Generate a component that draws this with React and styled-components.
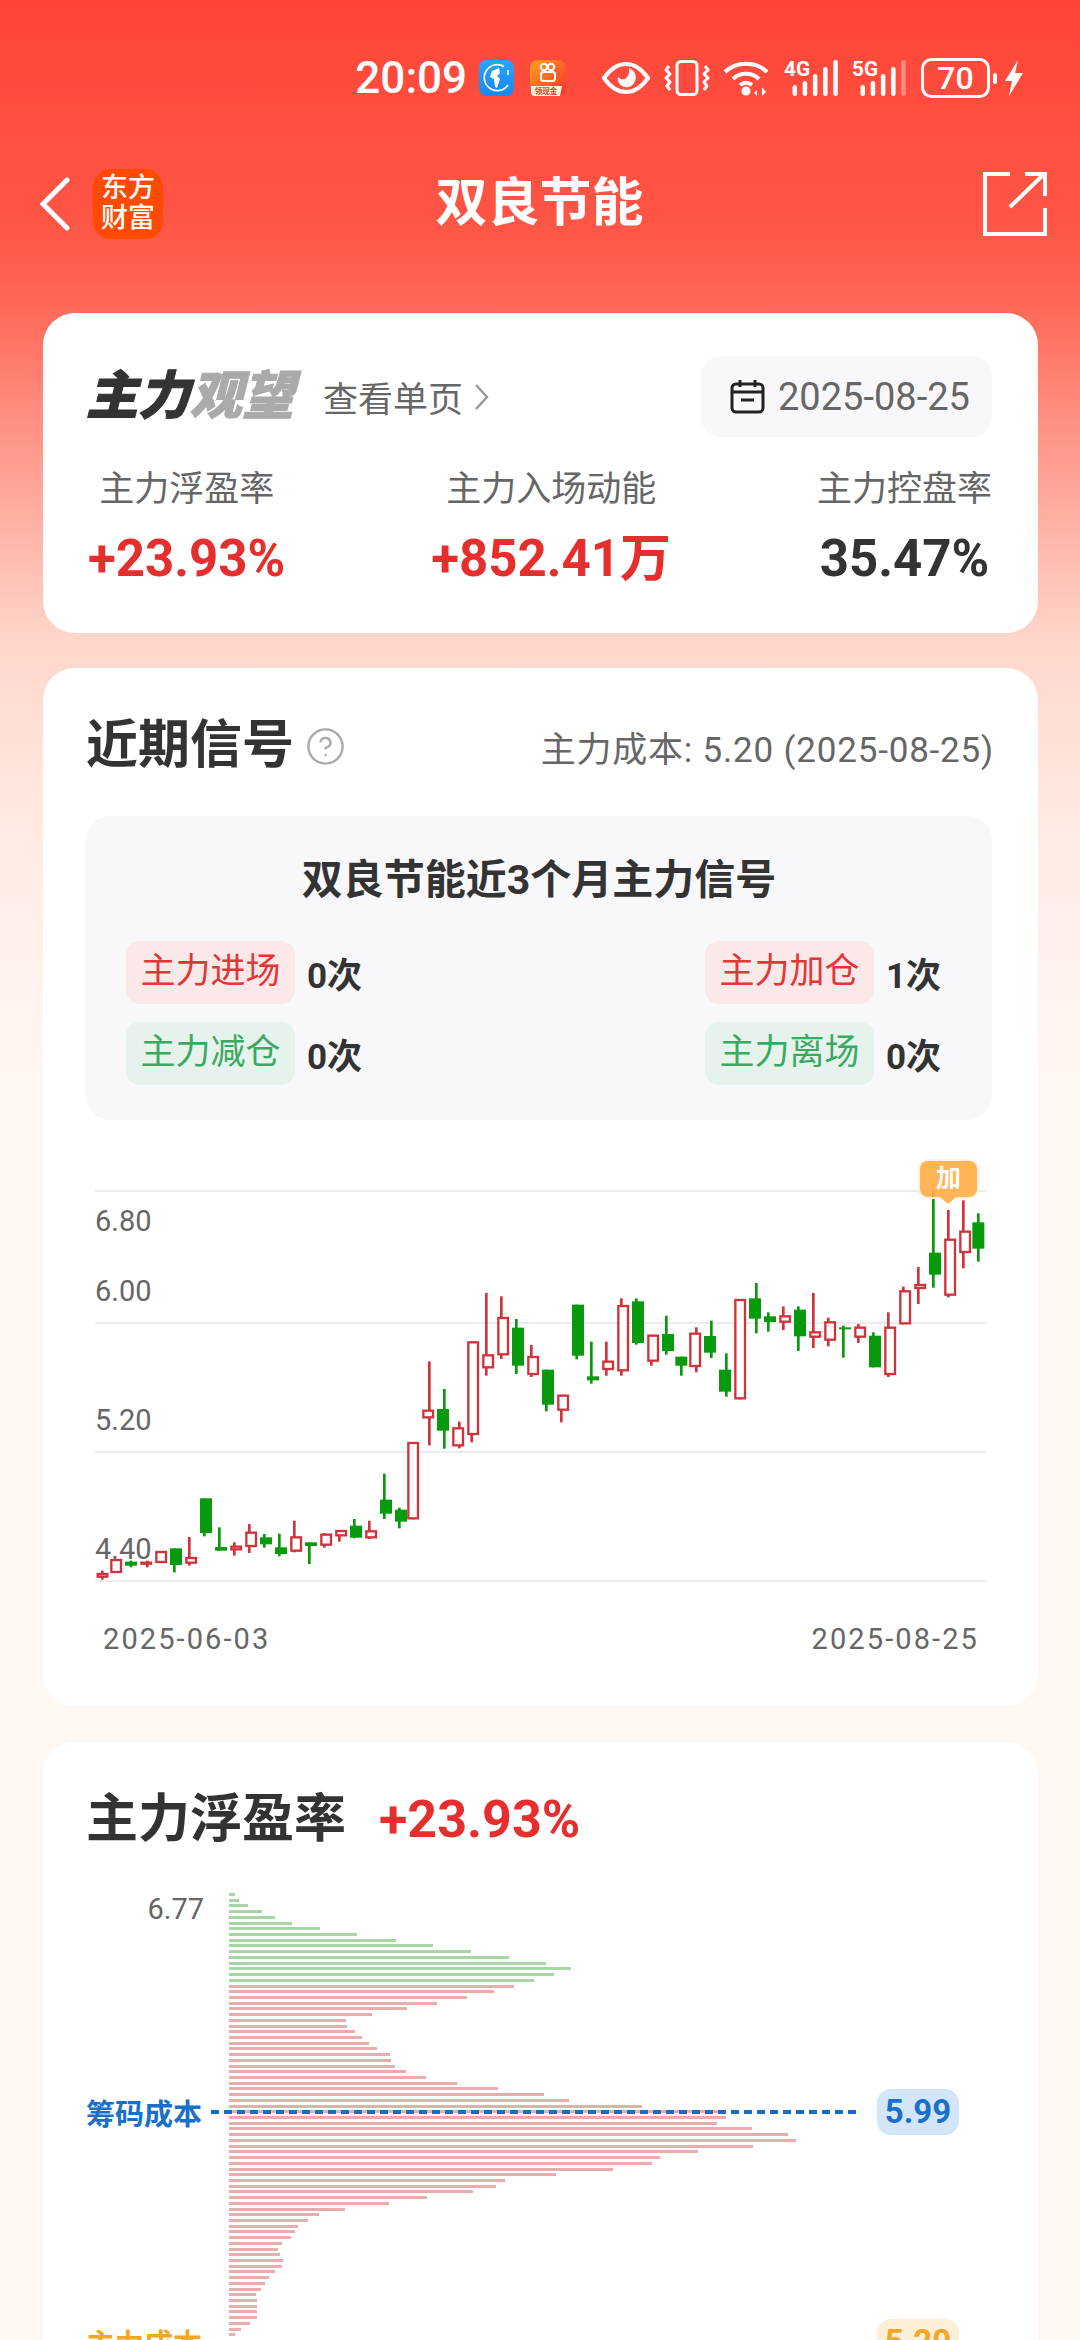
import React from "react";
import styled, { createGlobalStyle } from "styled-components";
import { CircleHelp } from "lucide-react";

const FONT = `Roboto, "Noto Sans CJK SC", sans-serif`;

// [bodyCenter, wickX, wickTop, wickBottom, bodyTop, bodyBottom, up], in units of 1/3 px
const CANDLES = [
  [97, 97, 1295, 1322, 1302, 1316, 1],
  [138, 138, 1260, 1302, 1260, 1302, 1],
  [183, 183, 1265, 1285, 1268, 1280, 0],
  [228, 232, 1265, 1285, 1268, 1275, 1],
  [273, 273, 1236, 1272, 1236, 1272, 1],
  [318, 313, 1228, 1300, 1228, 1278, 0],
  [363, 358, 1194, 1280, 1254, 1274, 1],
  [408, 403, 1078, 1192, 1078, 1182, 0],
  [453, 448, 1165, 1235, 1224, 1235, 0],
  [498, 493, 1210, 1250, 1220, 1234, 1],
  [543, 538, 1155, 1242, 1178, 1224, 1],
  [588, 583, 1185, 1226, 1195, 1216, 0],
  [633, 628, 1184, 1252, 1225, 1245, 0],
  [678, 673, 1145, 1240, 1192, 1238, 1],
  [723, 718, 1210, 1275, 1210, 1221, 0],
  [768, 763, 1182, 1226, 1184, 1220, 1],
  [813, 808, 1173, 1208, 1173, 1192, 1],
  [858, 853, 1140, 1198, 1160, 1196, 0],
  [903, 898, 1145, 1200, 1174, 1198, 1],
  [948, 943, 1004, 1140, 1082, 1124, 0],
  [993, 988, 1106, 1168, 1112, 1148, 0],
  [1029, 1029, 909, 1141, 909, 1141, 1],
  [1074, 1078, 667, 919, 812, 838, 1],
  [1119, 1123, 750, 929, 810, 875, 0],
  [1164, 1168, 848, 928, 865, 922, 1],
  [1209, 1205, 607, 910, 607, 888, 1],
  [1254, 1249, 462, 710, 646, 688, 1],
  [1299, 1294, 472, 660, 534, 649, 1],
  [1344, 1339, 540, 705, 566, 680, 0],
  [1389, 1384, 618, 714, 651, 708, 1],
  [1434, 1429, 692, 817, 692, 797, 0],
  [1479, 1474, 767, 850, 767, 815, 1],
  [1524, 1520, 497, 661, 497, 650, 0],
  [1569, 1564, 608, 734, 712, 724, 0],
  [1614, 1609, 608, 710, 665, 693, 1],
  [1659, 1654, 478, 710, 498, 697, 1],
  [1704, 1699, 478, 617, 487, 612, 0],
  [1749, 1744, 587, 680, 587, 668, 1],
  [1794, 1789, 530, 647, 585, 636, 0],
  [1834, 1834, 653, 710, 653, 680, 0],
  [1875, 1879, 565, 700, 581, 684, 1],
  [1920, 1924, 545, 657, 591, 641, 0],
  [1965, 1969, 643, 773, 692, 758, 0],
  [2010, 2010, 480, 781, 480, 781, 1],
  [2055, 2059, 432, 583, 478, 539, 0],
  [2100, 2095, 520, 578, 532, 549, 0],
  [2145, 2140, 502, 573, 529, 551, 1],
  [2190, 2185, 502, 636, 512, 592, 0],
  [2235, 2230, 462, 627, 577, 596, 1],
  [2280, 2275, 536, 622, 547, 605, 1],
  [2325, 2320, 560, 656, 565, 571, 0],
  [2370, 2365, 555, 612, 563, 596, 1],
  [2415, 2410, 580, 685, 590, 685, 0],
  [2460, 2455, 520, 714, 563, 708, 1],
  [2505, 2500, 443, 556, 454, 556, 1],
  [2550, 2545, 384, 495, 435, 450, 1],
  [2595, 2590, 155, 446, 341, 407, 0],
  [2640, 2635, 213, 475, 299, 470, 1],
  [2685, 2680, 184, 388, 275, 342, 1],
  [2725, 2725, 223, 368, 250, 329, 0],
];

const GREEN_BARS = [6, 10, 19, 33, 46, 63, 91, 128, 167, 204, 242, 280, 317, 342, 325, 305];
const RED_BARS = [
  285, 265, 238, 208, 178, 143, 117, 118, 126, 133, 140, 148, 161, 162, 166, 177, 197, 228, 269,
  315, 340, 413, 493, 497, 488, 523, 559, 567, 524, 469, 431, 423, 384, 327, 276, 267, 244, 198,
  160, 116, 90, 79, 69, 66, 62, 53, 49, 51, 54, 53, 46, 40, 36, 32, 27, 28, 28, 28, 28, 21, 12, 6,
];

const GlobalStyle = createGlobalStyle`
  html, body {
    margin: 0;
    padding: 0;
    background: #fff7f2;
  }
  * {
    box-sizing: border-box;
  }
`;

const Page = styled.div`
  width: 1080px;
  height: 2340px;
  overflow: hidden;
  padding: 58px 42px 0 43px;
  font-family: ${FONT};
  color: #333;
  background: linear-gradient(
    180deg,
    #ff4537 0,
    #ff5545 220px,
    #ff6656 300px,
    #ff9a8c 450px,
    #ffd6cb 640px,
    #ffeae2 820px,
    #fff7f2 1080px
  );
`;

const StatusBar = styled.div`
  display: flex;
  align-items: center;
  justify-content: flex-end;
  height: 40px;
  margin-right: 14px;
  color: #fff;
`;

const Clock = styled.span`
  font-size: 44px;
  line-height: 40px;
  font-weight: 500;
  margin-right: 12px;
`;

const StatusSlot = styled.span`
  display: flex;
  margin-left: ${(p) => p.$gap || 0}px;
  margin-top: ${(p) => p.$lift || 0}px;
`;

const Header = styled.header`
  position: relative;
  display: flex;
  align-items: center;
  justify-content: space-between;
  height: 70px;
  margin: 71px -9px 74px -3px;
`;

const BackGroup = styled.div`
  display: flex;
  align-items: center;
  gap: 23px;
`;

const AppLogo = styled.div`
  width: 70px;
  height: 70px;
  padding-top: 4px;
  border-radius: 18px;
  background: #ff4a00;
  color: #fff;
  font-size: 27px;
  line-height: 30px;
  font-weight: 500;
  text-align: center;
`;

const Title = styled.h1`
  position: absolute;
  left: 0;
  right: 0;
  margin: 0;
  padding-right: 8px;
  font-size: 52px;
  line-height: 70px;
  font-weight: 700;
  color: #fff;
  text-align: center;
`;

const Card = styled.section`
  margin-bottom: ${(p) => p.$gap || 0}px;
  padding: ${(p) => p.$pad || 48}px 46px ${(p) => p.$padEnd || 47}px 43px;
  background: #fff;
  border-radius: 32px;
`;

const TopRow = styled.div`
  display: flex;
  align-items: center;
  justify-content: space-between;
  height: 81px;
`;

const Row = styled.div`
  display: flex;
  align-items: center;
`;

const BrandMark = styled.div`
  font-size: 52px;
  line-height: 60px;
  font-weight: 900;
  font-style: italic;
  color: #333;
  -webkit-text-stroke: 1px currentColor;

  span {
    color: #aaa;
  }
`;

const SingleLink = styled.span`
  margin-left: 29px;
  font-size: 35px;
  color: #666;
`;

const DatePill = styled.div`
  display: flex;
  align-items: center;
  gap: 13px;
  width: 291px;
  height: 81px;
  padding-left: 29px;
  border-radius: 20px;
  background: #f8f8fa;
  font-size: 38px;
  color: #666;
`;

const Stats = styled.div`
  display: flex;
  justify-content: space-between;
  margin: 33px 0 0 2px;
`;

const Stat = styled.div`
  text-align: center;
`;

const StatLabel = styled.div`
  font-size: 35px;
  line-height: 40px;
  color: #666;
`;

const StatValue = styled.div`
  margin-top: 19px;
  font-size: 51px;
  line-height: 60px;
  font-weight: 700;
  white-space: nowrap;
  color: ${(p) => (p.$red ? "#e62e2e" : "#333")};
`;

const SectionHead = styled.div`
  display: flex;
  align-items: center;
  justify-content: space-between;
  height: 60px;
`;

const SectionTitle = styled.h2`
  margin: 0;
  font-size: 52px;
  line-height: 60px;
  font-weight: 700;
  color: #333;
`;

const SectionNote = styled.span`
  margin-right: -2px;
  font-size: 35px;
  letter-spacing: 0.8px;
  color: #666;
  white-space: nowrap;
`;

const SignalPanel = styled.div`
  height: 304px;
  margin-top: 40px;
  padding: 39px 51px 0 40px;
  border-radius: 24px;
  background: #f8f8fa;
`;

const PanelTitle = styled.div`
  height: 50px;
  margin-right: -11px;
  font-size: 41px;
  line-height: 50px;
  font-weight: 700;
  text-align: center;
  color: #333;
`;

const SignalGrid = styled.div`
  display: grid;
  grid-template-columns: auto auto;
  justify-content: space-between;
  row-gap: 18px;
  margin-top: 36px;
`;

const Signal = styled.div`
  display: flex;
  align-items: center;
  gap: 12px;
`;

const Chip = styled.span`
  width: 169px;
  height: 63px;
  border-radius: 14px;
  font-size: 35px;
  line-height: 62px;
  text-align: center;
  background: ${(p) => (p.$tone === "red" ? "#fbe8e8" : "#e6f3ec")};
  color: ${(p) => (p.$tone === "red" ? "#e23636" : "#3aa962")};
`;

const Count = styled.span`
  font-size: 35px;
  font-weight: 700;
  color: #333;
`;

const KChart = styled.div`
  position: relative;
  width: 891px;
  margin: 70px 0 0 9px;
  border-top: 2px solid #ececec;
`;

const KRow = styled.div`
  display: flex;
  flex-direction: column;
  justify-content: ${(p) => (p.$spread ? "space-between" : "flex-end")};
  height: ${(p) => p.$h}px;
  padding: ${(p) => (p.$spread ? 13 : 0)}px 0 15px;
  border-bottom: 2px solid #ececec;
`;

const AxisLabel = styled.span`
  font-size: 29px;
  line-height: 32px;
  color: #666;
`;

const CandleLayer = styled.svg`
  position: absolute;
  left: -25px;
  top: -53px;
  width: 1000px;
  height: 520px;
`;

const Flag = styled.div`
  position: absolute;
  left: 825px;
  top: -31px;
  width: 57px;
  height: 36px;
  border-radius: 8px;
  background: rgba(255, 172, 68, 0.9);
  box-shadow: 0 0 0 2px #fff1df;
  font-size: 25px;
  line-height: 35px;
  font-weight: 700;
  text-align: center;
  color: #fff;

  &::after {
    content: "";
    position: absolute;
    left: 20px;
    top: 36px;
    border-style: solid;
    border-width: 7px 8px 0;
    border-color: rgba(255, 172, 68, 0.9) transparent transparent;
  }
`;

const DateAxis = styled.div`
  display: flex;
  justify-content: space-between;
  width: 891px;
  margin: 37px 0 0 9px;
  padding: 0 7px 0 8px;
  font-size: 29px;
  line-height: 40px;
  letter-spacing: 2.1px;
  color: #666;
`;

const ProfitValue = styled.span`
  margin-left: 33px;
  font-size: 52px;
  line-height: 60px;
  font-weight: 700;
  color: #e62e2e;
`;

const ChipChart = styled.div`
  position: relative;
  display: flex;
  margin-top: 43px;
`;

const PriceColumn = styled.div`
  width: 143px;
  padding: 0 25px 0 0;
  text-align: right;
`;

const BarStack = styled.div`
  display: flex;
  flex-direction: column;
  gap: 2.73px;
`;

const ChipBar = styled.div`
  height: 3px;
  background: ${(p) => (p.$green ? "#a8d6a4" : "#e9adae")};
  box-shadow: 0 0 1px ${(p) => (p.$green ? "#d6edd4" : "#f8dcdc")};
`;

const Marker = styled.div`
  position: absolute;
  left: 0;
  top: ${(p) => p.$top}px;
  display: flex;
  align-items: center;
  height: 46px;
  color: ${(p) => p.$color};
`;

const MarkerName = styled.span`
  width: 125px;
  font-size: 29px;
  font-weight: 700;
  white-space: nowrap;
`;

const DashLine = styled.div`
  width: 648px;
  height: ${(p) => p.$thick}px;
  background: repeating-linear-gradient(
    90deg,
    ${(p) => p.$color} 0 ${(p) => p.$dash}px,
    transparent ${(p) => p.$dash}px 13px
  );
`;

const MarkerValue = styled.span`
  width: 82px;
  height: 46px;
  margin-left: 18px;
  border-radius: 14px;
  background: ${(p) => p.$bg};
  font-size: 33px;
  line-height: 46px;
  font-weight: 700;
  text-align: center;
`;

function GlobeIcon() {
  return (
    <svg width="35" height="36" viewBox="0 0 35 36">
      <defs>
        <linearGradient id="globeBg" x1="0" y1="0" x2="0" y2="1">
          <stop offset="0" stopColor="#2aa5fb" />
          <stop offset="1" stopColor="#1689f5" />
        </linearGradient>
      </defs>
      <rect width="35" height="36" rx="8" fill="url(#globeBg)" />
      <path d="M25 6.5A13 13 0 1 0 29 25" fill="none" stroke="#fff" strokeWidth="1.6" />
      <path d="M29 10v5" stroke="#fff" strokeWidth="1.6" />
      <path d="M13 11l7-3 1 5-3 3 3 3-3 9-2-1-1-8-4-2z" fill="#fff" />
    </svg>
  );
}

function CashAppIcon() {
  return (
    <svg width="36" height="36" viewBox="0 0 36 36">
      <defs>
        <linearGradient id="cashBg" x1="0" y1="0" x2="1" y2="1">
          <stop offset="0" stopColor="#ffa31a" />
          <stop offset="1" stopColor="#f5302e" />
        </linearGradient>
      </defs>
      <rect width="36" height="36" rx="8" fill="url(#cashBg)" />
      <circle cx="14" cy="7" r="3.2" fill="none" stroke="#fff" strokeWidth="2" />
      <circle cx="21" cy="7" r="3.2" fill="none" stroke="#fff" strokeWidth="2" />
      <rect x="11" y="12" width="14" height="9" rx="2.5" fill="none" stroke="#fff" strokeWidth="2" />
      <path d="M1 26h31l-2 10H5a4 4 0 0 1-4-4z" fill="#fff3d8" />
      <text x="16" y="34" fontSize="7.5" fontWeight="700" fill="#d2431e" textAnchor="middle">
        领现金
      </text>
    </svg>
  );
}

function EyeIcon() {
  return (
    <svg width="48" height="32" viewBox="0 0 48 32">
      <path
        d="M2 16C9 6 16 2 24 2s15 4 22 14c-7 10-14 14-22 14S9 26 2 16z"
        fill="none"
        stroke="#fff"
        strokeWidth="4"
      />
      <path d="M27 6c6 3 8 8 6 13-2 5-6 7-10 6-5-1-8-5-7-10 2 2 4 3 7 2 3-2 5-6 4-11z" fill="#fff" />
    </svg>
  );
}

function VibrateIcon() {
  return (
    <svg width="46" height="36" viewBox="0 0 46 36" fill="none" stroke="#fff" strokeWidth="3">
      <rect x="13" y="1.5" width="20" height="33" rx="4" />
      <path d="M5 6l-3 4 4 4-4 4 4 4-3 4 3 4M41 6l3 4-4 4 4 4-4 4 3 4-3 4" strokeLinejoin="round" />
    </svg>
  );
}

function WifiIcon() {
  return (
    <svg width="48" height="36" viewBox="0 0 48 36" fill="none" stroke="#fff" strokeWidth="4">
      <path d="M2 12C13 1 33 1 44 12" />
      <path d="M10 19c7-7 19-7 26 0" />
      <path d="M17 25c4-3 8-3 12 0" />
      <circle cx="23" cy="31" r="4.5" fill="#fff" stroke="none" />
      <path d="M34 36v-6l-3 3zM39 36v-9l4 5z" fill="#fff" stroke="none" />
    </svg>
  );
}

function SignalIcon({ label, faded }) {
  const heights = [11, 15, 22, 29, 36];
  return (
    <svg width="54" height="44" viewBox="0 -8 54 44">
      <text x="0" y="16" fontSize="20" fontWeight="700" fill="#fff" fontFamily="Roboto" textLength="26" lengthAdjust="spacingAndGlyphs">
        {label}
      </text>
      {heights.map((h, i) => (
        <rect
          key={i}
          x={8.5 + i * 10.2}
          y={36 - h}
          width="4.5"
          height={h}
          rx="2.2"
          fill="#fff"
          opacity={faded && i === 4 ? 0.35 : 1}
        />
      ))}
    </svg>
  );
}

function BatteryIcon() {
  return (
    <svg width="103" height="40" viewBox="0 0 103 40">
      <rect x="1.5" y="1.5" width="66" height="37" rx="9" fill="none" stroke="#fff" strokeWidth="3" />
      <text x="34.5" y="31" fontSize="32" fontWeight="500" fill="#fff" fontFamily="Roboto" textAnchor="middle">
        70
      </text>
      <rect x="72" y="15" width="4" height="11" rx="2" fill="#fff" />
      <path d="M97 2l-13 21h7l-3 15 14-23h-8z" fill="#fff" />
    </svg>
  );
}

function BackIcon() {
  return (
    <svg width="30" height="54" viewBox="0 0 30 54">
      <path d="M27 3L3 27l24 24" fill="none" stroke="#fff" strokeWidth="5" strokeLinecap="round" />
    </svg>
  );
}

function ShareIcon() {
  return (
    <svg width="64" height="64" viewBox="0 0 64 64" fill="none" stroke="#fff" strokeWidth="4">
      <path d="M27 2H2v60h60V36" />
      <path d="M27 35L60 3" />
      <path d="M42 2h20v22" />
    </svg>
  );
}

function CalendarIcon() {
  return (
    <svg width="35" height="35" viewBox="0 0 35 35" fill="none" stroke="#222" strokeWidth="3">
      <rect x="2" y="5" width="31" height="28" rx="4" />
      <path d="M2 13h31M10 1v7M25 1v7M11 21h13" />
    </svg>
  );
}

function Candles() {
  return (
    <CandleLayer viewBox="0 0 3000 1560">
      {CANDLES.map(([cx, wx, wTop, wBot, top, bot, up], i) => {
        const color = up ? "#cf333b" : "#069a0c";
        return (
          <g key={i}>
            <line x1={wx} x2={wx} y1={wTop} y2={wBot} stroke={color} strokeWidth="8" />
            {up ? (
              <rect x={cx - 14} y={top + 3} width="29" height={Math.max(bot - top - 6, 3)} fill="#fff" stroke={color} strokeWidth="7" />
            ) : (
              <rect x={cx - 18} y={top} width="36" height={bot - top} fill={color} />
            )}
          </g>
        );
      })}
    </CandleLayer>
  );
}

export default function App() {
  return (
    <Page>
      <GlobalStyle />
      <StatusBar>
        <Clock>20:09</Clock>
        <GlobeIcon />
        <StatusSlot $gap={16}>
          <CashAppIcon />
        </StatusSlot>
        <StatusSlot $gap={36}>
          <EyeIcon />
        </StatusSlot>
        <StatusSlot $gap={14}>
          <VibrateIcon />
        </StatusSlot>
        <StatusSlot $gap={13}>
          <WifiIcon />
        </StatusSlot>
        <StatusSlot $gap={13} $lift={-8}>
          <SignalIcon label="4G" />
        </StatusSlot>
        <StatusSlot $gap={14} $lift={-8}>
          <SignalIcon label="5G" faded />
        </StatusSlot>
        <StatusSlot $gap={15}>
          <BatteryIcon />
        </StatusSlot>
      </StatusBar>

      <Header>
        <Title>双良节能</Title>
        <BackGroup>
          <BackIcon />
          <AppLogo>
            东方
            <br />
            财富
          </AppLogo>
        </BackGroup>
        <ShareIcon />
      </Header>

      <Card $gap={35} $pad={43} $padEnd={44}>
        <TopRow>
          <Row>
            <BrandMark>
              主力<span>观望</span>
            </BrandMark>
            <SingleLink>查看单页</SingleLink>
            <svg width="16" height="28" viewBox="0 0 16 28" style={{ marginLeft: 11 }}>
              <path d="M2 2l11 12L2 26" fill="none" stroke="#999" strokeWidth="2.5" />
            </svg>
          </Row>
          <DatePill>
            <CalendarIcon />
            2025-08-25
          </DatePill>
        </TopRow>
        <Stats>
          <Stat>
            <StatLabel>主力浮盈率</StatLabel>
            <StatValue $red>+23.93%</StatValue>
          </Stat>
          <Stat>
            <StatLabel>主力入场动能</StatLabel>
            <StatValue $red>+852.41万</StatValue>
          </Stat>
          <Stat>
            <StatLabel>主力控盘率</StatLabel>
            <StatValue>35.47%</StatValue>
          </Stat>
        </Stats>
      </Card>

      <Card $gap={36}>
        <SectionHead>
          <Row>
            <SectionTitle>近期信号</SectionTitle>
            <CircleHelp size={41} color="#aaa" strokeWidth={1.4} style={{ marginLeft: 11 }} />
          </Row>
          <SectionNote>主力成本: 5.20 (2025-08-25)</SectionNote>
        </SectionHead>

        <SignalPanel>
          <PanelTitle>双良节能近3个月主力信号</PanelTitle>
          <SignalGrid>
            <Signal>
              <Chip $tone="red">主力进场</Chip>
              <Count>0次</Count>
            </Signal>
            <Signal>
              <Chip $tone="red">主力加仓</Chip>
              <Count>1次</Count>
            </Signal>
            <Signal>
              <Chip $tone="green">主力减仓</Chip>
              <Count>0次</Count>
            </Signal>
            <Signal>
              <Chip $tone="green">主力离场</Chip>
              <Count>0次</Count>
            </Signal>
          </SignalGrid>
        </SignalPanel>

        <KChart>
          <KRow $h={132} $spread>
            <AxisLabel>6.80</AxisLabel>
            <AxisLabel>6.00</AxisLabel>
          </KRow>
          <KRow $h={129}>
            <AxisLabel>5.20</AxisLabel>
          </KRow>
          <KRow $h={129}>
            <AxisLabel>4.40</AxisLabel>
          </KRow>
          <Candles />
          <Flag>加</Flag>
        </KChart>
        <DateAxis>
          <span>2025-06-03</span>
          <span>2025-08-25</span>
        </DateAxis>
      </Card>

      <Card>
        <SectionHead>
          <Row>
            <SectionTitle>主力浮盈率</SectionTitle>
            <ProfitValue>+23.93%</ProfitValue>
          </Row>
        </SectionHead>
        <ChipChart>
          <PriceColumn>
            <AxisLabel>6.77</AxisLabel>
          </PriceColumn>
          <BarStack>
            {GREEN_BARS.map((w, i) => (
              <ChipBar key={i} $green style={{ width: w }} />
            ))}
            {RED_BARS.map((w, i) => (
              <ChipBar key={i} style={{ width: w }} />
            ))}
          </BarStack>
          <Marker $top={196} $color="#1a6fc9">
            <MarkerName>筹码成本</MarkerName>
            <DashLine $color="#1a6bc4" $thick={4} $dash={8} />
            <MarkerValue $bg="#d3e5f8">5.99</MarkerValue>
          </Marker>
          <Marker $top={426} $color="#f5a623">
            <MarkerName>主力成本</MarkerName>
            <DashLine $color="#e3b566" $thick={2} $dash={6} />
            <MarkerValue $bg="#fdeed8">5.20</MarkerValue>
          </Marker>
        </ChipChart>
      </Card>
    </Page>
  );
}
